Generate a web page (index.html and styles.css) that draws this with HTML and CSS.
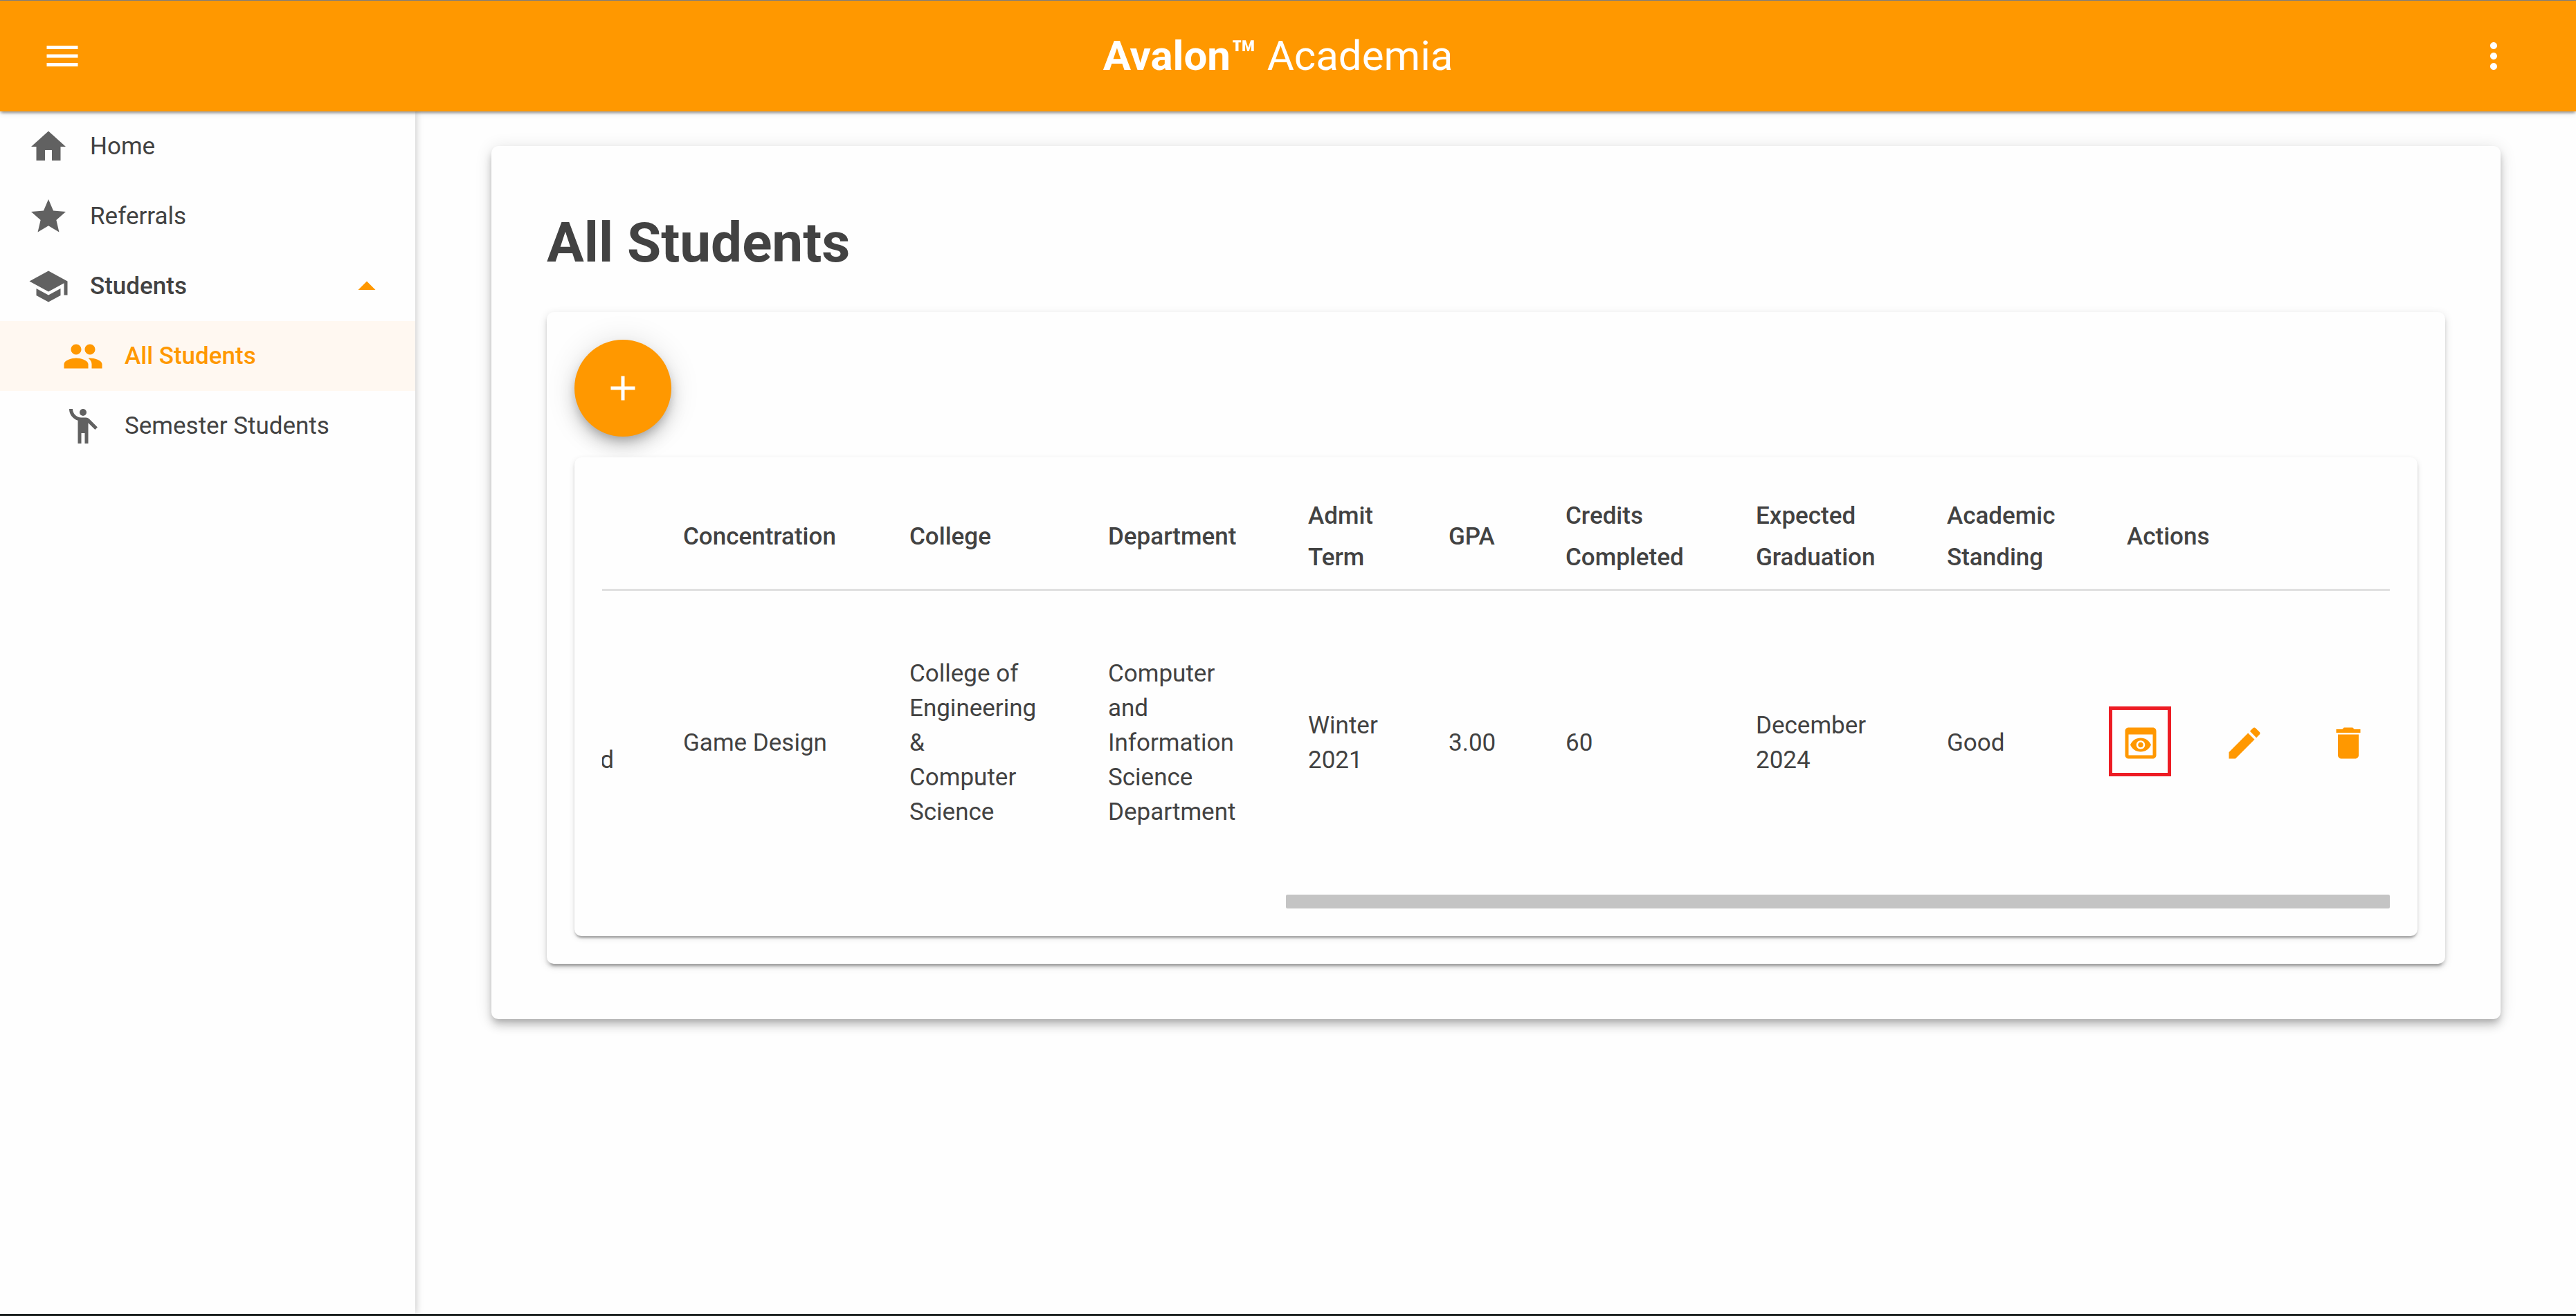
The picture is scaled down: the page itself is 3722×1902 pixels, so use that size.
FILE: index.html
```html
<!DOCTYPE html>
<html lang="en">
<head>
<meta charset="utf-8">
<title>Avalon Academia</title>
<link rel="stylesheet" href="styles.css">
</head>
<body>
<div class="app">
  <header class="toolbar">
    <button class="icon-button" type="button" aria-label="Toggle menu">
      <svg class="icon" viewBox="0 0 24 24"><path d="M3 18h18v-2H3v2zm0-5h18v-2H3v2zm0-7v2h18V6H3z"/></svg>
    </button>
    <div class="brand"><strong>Avalon™</strong> Academia</div>
    <button class="icon-button" type="button" aria-label="More options">
      <svg class="icon" viewBox="0 0 24 24"><path d="M12 8c1.1 0 2-.9 2-2s-.9-2-2-2-2 .9-2 2 .9 2 2 2zm0 2c-1.1 0-2 .9-2 2s.9 2 2 2 2-.9 2-2-.9-2-2-2zm0 6c-1.1 0-2 .9-2 2s.9 2 2 2 2-.9 2-2-.9-2-2-2z"/></svg>
    </button>
  </header>
  <div class="body">
    <nav class="sidebar">
      <a class="nav-item" href="#home">
        <svg class="icon" viewBox="0 0 24 24"><path d="M10 20v-6h4v6h5v-8h3L12 3 2 12h3v8z"/></svg>
        <span>Home</span>
      </a>
      <a class="nav-item" href="#referrals">
        <svg class="icon" viewBox="0 0 24 24"><path d="M12 17.27L18.18 21l-1.64-7.03L22 9.24l-7.19-.61L12 2 9.19 8.63 2 9.24l5.46 4.73L5.82 21z"/></svg>
        <span>Referrals</span>
      </a>
      <a class="nav-item open" href="#students">
        <svg class="icon" viewBox="0 0 24 24"><path d="M5 13.18v4L12 21l7-3.82v-4L12 17l-7-3.82zM12 3L1 9l11 6 9-4.91V17h2V9L12 3z"/></svg>
        <span>Students</span>
        <svg class="icon caret" viewBox="0 0 24 24"><path d="M7 14l5-5 5 5z"/></svg>
      </a>
      <a class="nav-item sub active" href="#all-students">
        <svg class="icon" viewBox="0 0 24 24"><path d="M16 11c1.66 0 2.99-1.34 2.99-3S17.66 5 16 5c-1.66 0-3 1.34-3 3s1.34 3 3 3zm-8 0c1.66 0 2.99-1.34 2.99-3S9.66 5 8 5C6.34 5 5 6.34 5 8s1.34 3 3 3zm0 2c-2.33 0-7 1.17-7 3.5V19h14v-2.5c0-2.33-4.67-3.5-7-3.5zm8 0c-.29 0-.62.02-.97.05 1.16.84 1.97 1.97 1.97 3.45V19h6v-2.5c0-2.33-4.67-3.5-7-3.5z"/></svg>
        <span>All Students</span>
      </a>
      <a class="nav-item sub" href="#semester-students">
        <svg class="icon" viewBox="0 0 24 24"><circle cx="12" cy="4" r="2"/><path d="M15.89 8.11C15.5 7.72 14.83 7 13.53 7h-2.54C8.24 6.99 6 4.75 6 2H4c0 3.16 2.11 5.84 5 6.71V22h2v-6h2v6h2V10.05L18.95 14l1.41-1.41-4.47-4.48z"/></svg>
        <span>Semester Students</span>
      </a>
    </nav>
    <main class="content">
      <section class="card page-card">
        <h1>All Students</h1>
        <div class="card list-card">
          <button class="fab" type="button" aria-label="Add student">
            <svg class="icon" viewBox="0 0 24 24"><path d="M19 13h-6v6h-2v-6H5v-2h6V5h2v6h6v2z"/></svg>
          </button>
          <div class="card table-card">
            <div class="table-scroll" id="table-scroll">
              <table>
                <colgroup>
                  <col>
                  <col class="col-concentration">
                  <col class="col-college">
                  <col class="col-department">
                  <col class="col-term">
                  <col class="col-gpa">
                  <col class="col-credits">
                  <col class="col-graduation">
                  <col class="col-standing">
                  <col class="col-actions">
                </colgroup>
                <thead>
                  <tr>
                    <th></th>
                    <th>Concentration</th>
                    <th>College</th>
                    <th>Department</th>
                    <th>Admit Term</th>
                    <th>GPA</th>
                    <th>Credits Completed</th>
                    <th>Expected Graduation</th>
                    <th>Academic Standing</th>
                    <th>Actions</th>
                  </tr>
                </thead>
                <tbody>
                  <tr>
                    <td class="lead">&nbsp;<br>d</td>
                    <td>Game Design</td>
                    <td>College of Engineering &amp;<br>Computer Science</td>
                    <td>Computer and Information Science Department</td>
                    <td>Winter 2021</td>
                    <td>3.00</td>
                    <td>60</td>
                    <td>December 2024</td>
                    <td>Good</td>
                    <td class="actions-cell">
                      <div class="actions">
                        <button class="icon-button marked" type="button" aria-label="View student">
                          <svg class="icon" viewBox="0 0 24 24"><path d="M19 3H5C3.89 3 3 3.9 3 5v14c0 1.1.89 2 2 2h14c1.1 0 2-.9 2-2V5c0-1.1-.89-2-2-2zm0 16H5V7h14v12zM13.5 13c0 .83-.67 1.5-1.5 1.5s-1.5-.67-1.5-1.5c0-.83.67-1.5 1.5-1.5s1.5.67 1.5 1.5zM12 9c-2.73 0-5.06 1.66-6 4 .94 2.34 3.27 4 6 4s5.06-1.66 6-4c-.94-2.34-3.27-4-6-4zm0 6.5c-1.38 0-2.5-1.12-2.5-2.5s1.12-2.5 2.5-2.5 2.5 1.12 2.5 2.5-1.12 2.5-2.5 2.5z"/></svg>
                        </button>
                        <button class="icon-button" type="button" aria-label="Edit student">
                          <svg class="icon" viewBox="0 0 24 24"><path d="M3 17.25V21h3.75L17.81 9.94l-3.75-3.75L3 17.25zM20.71 7.04c.39-.39.39-1.02 0-1.41l-2.34-2.34c-.39-.39-1.02-.39-1.41 0l-1.83 1.83 3.75 3.75 1.83-1.83z"/></svg>
                        </button>
                        <button class="icon-button" type="button" aria-label="Delete student">
                          <svg class="icon" viewBox="0 0 24 24"><path d="M6 19c0 1.1.9 2 2 2h8c1.1 0 2-.9 2-2V7H6v12zM19 4h-3.5l-1-1h-5l-1 1H5v2h14V4z"/></svg>
                        </button>
                      </div>
                    </td>
                  </tr>
                </tbody>
              </table>
            </div>
            <div class="scroll-track" aria-hidden="true">
              <div class="scroll-thumb" id="scroll-thumb"></div>
            </div>
          </div>
        </div>
      </section>
    </main>
  </div>
</div>
<script src="app.js"></script>
</body>
</html>
```
FILE: styles.css
```css
:root {
  --accent: #ff9800;
  --surface: #fefefe;
  --text: #424242;
  --icon: #616161;
}

*, *::after { box-sizing: border-box; }

body {
  margin: 0;
  background: var(--surface);
  color: var(--text);
  font-family: Roboto, "Liberation Sans", sans-serif;
  font-size: 35px;
  line-height: 50px;
}

.app {
  display: flex;
  flex-direction: column;
  min-height: 100vh;
  border-top: 1px solid #808080;
  border-bottom: 3px solid #1f2423;
}

.icon {
  display: block;
  flex: none;
  width: 60px;
  height: 60px;
  fill: currentColor;
}

button {
  display: grid;
  place-items: center;
  padding: 0;
  border: 0;
  background: none;
  color: inherit;
  font: inherit;
}

.icon-button {
  width: 120px;
  height: 120px;
}

.toolbar {
  position: relative;
  z-index: 2;
  display: flex;
  align-items: center;
  justify-content: space-between;
  height: 160px;
  padding: 0 59px 0 30px;
  background: var(--accent);
  color: #fff;
  box-shadow: 0 5px 3px -3px rgba(0, 0, 0, .2), 0 3px 3px rgba(0, 0, 0, .14), 0 3px 8px rgba(0, 0, 0, .12);
}

.brand {
  font-size: 60px;
  line-height: 80px;
}

.brand strong { font-weight: 700; }

.body {
  display: flex;
  flex: 1;
}

.sidebar {
  flex: none;
  width: 600px;
  box-shadow: 1px 0 10px rgba(0, 0, 0, .22);
}

.nav-item {
  display: flex;
  align-items: center;
  gap: 30px;
  height: 101px;
  padding: 0 40px;
  color: inherit;
  text-decoration: none;
}

.nav-item .icon { color: var(--icon); }
.nav-item.open { font-weight: 500; }
.nav-item .caret { margin-left: auto; }
.nav-item.sub { padding-left: 90px; }

.nav-item.active {
  background: #fff8f1;
  color: var(--accent);
  font-weight: 500;
}

.nav-item.active .icon,
.nav-item .icon.caret { color: var(--accent); }

.content {
  flex: 1;
  min-width: 0;
  padding: 50px 109px 50px 110px;
}

.card {
  border-radius: 10px;
  background: var(--surface);
}

.page-card {
  padding: 80px;
  box-shadow: 0 5px 10px -3px rgba(0, 0, 0, .2), 0 10px 13px rgba(0, 0, 0, .14), 0 3px 25px rgba(0, 0, 0, .12);
}

h1 {
  margin: 0 0 40px;
  font-size: 80px;
  font-weight: 700;
  line-height: 120px;
}

.list-card {
  padding: 40px;
  box-shadow: 0 8px 3px -5px rgba(0, 0, 0, .2), 0 5px 5px rgba(0, 0, 0, .14), 0 3px 13px rgba(0, 0, 0, .12);
}

.fab {
  width: 140px;
  height: 140px;
  margin-bottom: 30px;
  border-radius: 50%;
  background: var(--accent);
  color: #fff;
  box-shadow: 0 8px 13px -3px rgba(0, 0, 0, .2), 0 15px 25px rgba(0, 0, 0, .14), 0 3px 45px rgba(0, 0, 0, .12);
}

.table-card {
  padding: 40px;
  box-shadow: 0 5px 3px -3px rgba(0, 0, 0, .2), 0 3px 3px rgba(0, 0, 0, .14), 0 3px 8px rgba(0, 0, 0, .12);
}

.table-scroll {
  overflow-x: auto;
  scrollbar-width: none;
}

.scroll-track { height: 20px; }

.scroll-thumb {
  width: 62%;
  height: 100%;
  margin-left: auto;
  border-radius: 2px;
  background: #c4c4c4;
}

/* The table is wider than its card and scrolls sideways. */
table {
  width: 4183px;
  table-layout: fixed;
  border-collapse: separate;
  border-spacing: 0;
  text-align: left;
}

.col-concentration { width: 327px; }
.col-college { width: 287px; }
.col-department { width: 289px; }
.col-term { width: 203px; }
.col-gpa { width: 169px; }
.col-credits { width: 275px; }
.col-graduation { width: 276px; }
.col-standing { width: 260px; }
.col-actions { width: 430px; }

th, td { padding: 0 50px; }

th {
  height: 153px;
  border-bottom: 3px solid #e0e0e0;
  font-weight: 500;
  line-height: 60px;
}

td { height: 439px; }

.lead { text-align: right; }

td.actions-cell { padding: 0 0 0 10px; }

.actions {
  display: flex;
  gap: 30px;
  color: var(--accent);
}

.marked { position: relative; }

.marked::after {
  content: "";
  position: absolute;
  top: 7px;
  left: 14px;
  width: 90px;
  height: 101px;
  border: 5px solid #ed1c24;
}
```
FILE: app.js
```js
const scroller = document.getElementById("table-scroll");
const thumb = document.getElementById("scroll-thumb");

function sizeThumb() {
  thumb.style.width = (scroller.clientWidth / scroller.scrollWidth) * 100 + "%";
}

window.addEventListener("resize", sizeThumb);
sizeThumb();
scroller.scrollLeft = scroller.scrollWidth;
```
